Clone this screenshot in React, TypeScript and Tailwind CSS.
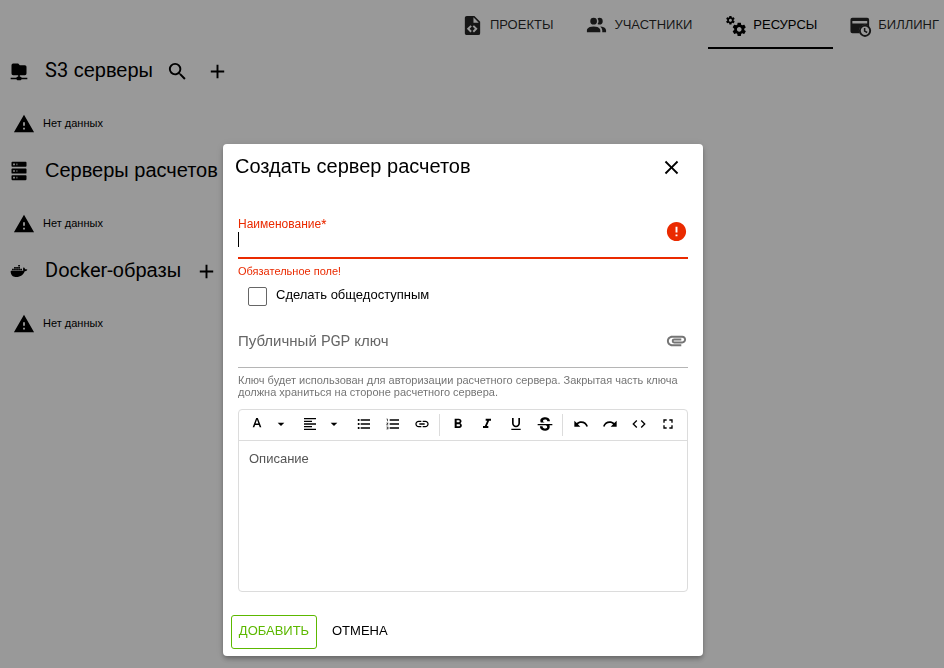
import type { ReactNode } from "react";
import {
  MdAdd,
  MdArrowDropDown,
  MdAttachment,
  MdClose,
  MdCode,
  MdError,
  MdFormatAlignLeft,
  MdFormatBold,
  MdFormatItalic,
  MdFormatListBulleted,
  MdFormatListNumbered,
  MdFormatUnderlined,
  MdFullscreen,
  MdLink,
  MdRedo,
  MdSearch,
  MdUndo,
  MdWarning,
} from "react-icons/md";

const paths = {
  fileCode:
    "M13,9H18.5L13,3.5V9M6,2H14L20,8V20A2,2 0 0,1 18,22H6C4.89,22 4,21.1 4,20V4C4,2.89 4.89,2 6,2M6.12,15.5L9.86,19.24L11.28,17.83L8.95,15.5L11.28,13.17L9.86,11.76L6.12,15.5M17.28,15.5L13.54,11.76L12.12,13.17L14.45,15.5L12.12,17.83L13.54,19.24L17.28,15.5Z",
  people:
    "M16 17V19H2V17S2 13 9 13 16 17 16 17M12.5 7.5A3.5 3.5 0 1 0 9 11A3.5 3.5 0 0 0 12.5 7.5M15.94 13A5.32 5.32 0 0 1 18 17V19H22V17S22 13.37 15.94 13M15 4A3.39 3.39 0 0 0 13.07 4.59A5 5 0 0 1 13.07 10.41A3.39 3.39 0 0 0 15 11A3.5 3.5 0 0 0 15 4Z",
  cogs: "M15.9,18.45C17.25,18.45 18.35,17.35 18.35,16C18.35,14.65 17.25,13.55 15.9,13.55C14.54,13.55 13.45,14.65 13.45,16C13.45,17.35 14.54,18.45 15.9,18.45M21.1,16.68L22.58,17.84C22.71,17.95 22.75,18.13 22.66,18.29L21.26,20.71C21.17,20.86 21,20.92 20.83,20.86L19.09,20.16C18.73,20.44 18.33,20.67 17.91,20.85L17.64,22.7C17.62,22.87 17.47,23 17.3,23H14.5C14.32,23 14.18,22.87 14.15,22.7L13.89,20.85C13.46,20.67 13.07,20.44 12.71,20.16L10.96,20.86C10.81,20.92 10.62,20.86 10.54,20.71L9.14,18.29C9.05,18.13 9.09,17.95 9.22,17.84L10.7,16.68L10.65,16L10.7,15.31L9.22,14.16C9.09,14.05 9.05,13.86 9.14,13.71L10.54,11.29C10.62,11.13 10.81,11.07 10.96,11.13L12.71,11.84C13.07,11.56 13.46,11.32 13.89,11.15L14.15,9.29C14.18,9.13 14.32,9 14.5,9H17.3C17.47,9 17.62,9.13 17.64,9.29L17.91,11.15C18.33,11.32 18.73,11.56 19.09,11.84L20.83,11.13C21,11.07 21.17,11.13 21.26,11.29L22.66,13.71C22.75,13.86 22.71,14.05 22.58,14.16L21.1,15.31L21.15,16L21.1,16.68M6.69,8.07C7.56,8.07 8.26,7.37 8.26,6.5C8.26,5.63 7.56,4.92 6.69,4.92A1.58,1.58 0 0,0 5.11,6.5C5.11,7.37 5.82,8.07 6.69,8.07M10.03,6.94L11,7.68C11.07,7.75 11.09,7.87 11.03,7.97L10.13,9.53C10.08,9.63 9.96,9.67 9.86,9.63L8.74,9.18L8,9.62L7.81,10.81C7.79,10.92 7.7,11 7.59,11H5.79C5.67,11 5.58,10.92 5.56,10.81L5.4,9.62L4.64,9.18L3.52,9.63C3.41,9.67 3.3,9.63 3.24,9.53L2.34,7.97C2.28,7.87 2.31,7.75 2.39,7.68L3.34,6.94L3.31,6.5L3.34,6.06L2.39,5.32C2.31,5.25 2.28,5.13 2.34,5.03L3.24,3.47C3.3,3.37 3.41,3.33 3.52,3.37L4.63,3.82L5.4,3.38L5.56,2.19C5.58,2.08 5.67,2 5.79,2H7.59C7.7,2 7.79,2.08 7.81,2.19L8,3.38L8.74,3.82L9.86,3.37C9.96,3.33 10.08,3.37 10.13,3.47L11.03,5.03C11.09,5.13 11.07,5.25 11,5.32L10.03,6.06L10.06,6.5L10.03,6.94Z",
  folderNetwork:
    "M3,15V5A2,2 0 0,1 5,3H11L13,5H19A2,2 0 0,1 21,7V15A2,2 0 0,1 19,17H13V19H14A1,1 0 0,1 15,20H22V22H15A1,1 0 0,1 14,23H10A1,1 0 0,1 9,22H2V20H9A1,1 0 0,1 10,19H11V17H5A2,2 0 0,1 3,15Z",
  server:
    "M4,1H20A1,1 0 0,1 21,2V6A1,1 0 0,1 20,7H4A1,1 0 0,1 3,6V2A1,1 0 0,1 4,1M4,9H20A1,1 0 0,1 21,10V14A1,1 0 0,1 20,15H4A1,1 0 0,1 3,14V10A1,1 0 0,1 4,9M4,17H20A1,1 0 0,1 21,18V22A1,1 0 0,1 20,23H4A1,1 0 0,1 3,22V18A1,1 0 0,1 4,17M9,5H10V3H9V5M9,13H10V11H9V13M9,21H10V19H9V21M5,3V5H7V3H5M5,11V13H7V11H5M5,19V21H7V19H5Z",
  docker:
    "M21.81 10.25C21.75 10.21 21.25 9.82 20.17 9.82C19.89 9.82 19.61 9.85 19.33 9.9C19.12 8.5 17.95 7.79 17.9 7.76L17.61 7.59L17.43 7.86C17.19 8.22 17 8.63 16.92 9.05C16.72 9.85 16.84 10.61 17.25 11.26C16.76 11.54 15.96 11.61 15.79 11.61H2.62C2.28 11.61 2 11.89 2 12.24C2 13.39 2.18 14.54 2.58 15.62C3.03 16.81 3.71 17.69 4.58 18.23C5.56 18.83 7.17 19.17 8.97 19.17C9.79 19.17 10.61 19.1 11.42 18.95C12.54 18.75 13.62 18.36 14.61 17.79C15.43 17.32 16.16 16.72 16.78 16C17.82 14.83 18.43 13.5 18.88 12.35H19.06C20.2 12.35 20.91 11.89 21.3 11.5C21.56 11.26 21.76 10.97 21.9 10.63L22 10.39L21.81 10.25M3.69 9.34H5.77V11.24H3.69ZM6.12 9.34H8.2V11.24H6.12ZM8.6 9.34H10.67V11.24H8.6ZM11.04 9.34H13.11V11.24H11.04ZM13.5 9.34H15.57V11.24H13.5ZM6.12 7.09H8.2V9H6.12ZM8.6 7.09H10.67V9H8.6ZM11.04 7.09H13.11V9H11.04ZM11.04 4.83H13.11V6.72H11.04Z",
  letterA:
    "M5.49 17h2.42l1.27-3.58h5.65L16.09 17h2.42L13.25 3h-2.5L5.49 17zm4.42-5.61 2.03-5.79h.12l2.03 5.79H9.91z",
  strike:
    "M23,12V14H18.61C19.61,16.14 19.56,22 12.38,22C4.05,22.05 4.37,15.5 4.37,15.5L8.34,15.55C8.37,18.92 11.5,18.92 12.12,18.88C12.76,18.83 15.15,18.84 15.34,16.5C15.42,15.41 14.32,14.58 13.12,14H1V12H23M19.41,7.89L15.43,7.86C15.43,7.86 15.6,5.09 12.15,5.08C8.7,5.06 9,7.28 9,7.56C9.04,7.84 9.34,9.22 12,9.88H5.71C5.71,9.88 2.22,3.15 10.74,2C19.45,0.8 19.43,7.91 19.41,7.89Z",
};

function Icon({ d, className }: { d: string; className: string }) {
  return (
    <svg viewBox="0 0 24 24" fill="currentColor" fillRule="evenodd" aria-hidden="true" className={className}>
      <path d={d} />
    </svg>
  );
}

function CardClockIcon() {
  return (
    <svg viewBox="0 0 24 24" fill="currentColor" aria-hidden="true" className="size-[23px] shrink-0">
      <path
        fillRule="evenodd"
        d="M3.5 4H19A2 2 0 0 1 21 6V13.6A6 6 0 0 0 11 20H3.5A2 2 0 0 1 1.500 18V6A2 2 0 0 1 3.500 4M3.500 7.200V9.800H19V7.200Z"
      />
      <circle cx="16.7" cy="17.5" r="5.4" fill="none" stroke="currentColor" strokeWidth="2" />
      <path d="M16.3 14.5V17.8L19 19.3" fill="none" stroke="currentColor" strokeWidth="1.6" />
    </svg>
  );
}

function Tab({ icon, label, active = false }: { icon: ReactNode; label: string; active?: boolean }) {
  return (
    <a
      href="#"
      className={`flex h-full shrink-0 items-center gap-1.5 border-b-2 px-4 pt-1 text-[13px] ${
        active ? "border-black text-black" : "border-transparent text-black/85"
      }`}
    >
      {icon}
      <span className="pb-0.5">{label}</span>
    </a>
  );
}

function Section({ icon, title, search = false }: { icon: string; title: ReactNode; search?: boolean }) {
  return (
    <section>
      <div className="flex h-11 items-center pl-[9px]">
        <Icon d={icon} className="size-5 shrink-0" />
        <h2 className="ml-4 mr-[5px] whitespace-nowrap pb-0.5 text-xl">{title}</h2>
        {search && (
          <button type="button" aria-label="Поиск" className="grid size-10 place-items-center">
            <MdSearch className="size-[23px]" />
          </button>
        )}
        <button type="button" aria-label="Добавить" className="grid size-10 place-items-center">
          <MdAdd className="size-[23px]" />
        </button>
      </div>
      <div className="flex h-14 items-center gap-2 pl-[13px] pt-1.5 text-[11px]">
        <MdWarning className="size-[22px]" />
        <span className="pb-0.5">Нет данных</span>
      </div>
    </section>
  );
}

function Tool({ label, children }: { label: string; children: ReactNode }) {
  return (
    <button type="button" aria-label={label} className="grid h-6 w-[29px] shrink-0 place-items-center pb-0.5">
      {children}
    </button>
  );
}

function MenuTool({ label, children }: { label: string; children: ReactNode }) {
  return (
    <button type="button" aria-label={label} className="flex h-6 w-[53px] shrink-0 items-center gap-2 px-1.5 pb-0.5">
      {children}
      <MdArrowDropDown className="size-4" />
    </button>
  );
}

function Dialog() {
  return (
    <div className="fixed inset-0 flex items-start justify-center bg-black/40 pr-[18px] pt-36">
      <form
        role="dialog"
        aria-labelledby="dialog-title"
        className="w-[480px] max-w-full rounded-sm bg-white shadow-[0_2px_4px_-1px_rgba(0,0,0,0.2),0_4px_5px_rgba(0,0,0,0.14),0_1px_10px_rgba(0,0,0,0.12)]"
      >
        <div className="flex h-[46px] items-center justify-between pl-3 pr-5">
          <h1 id="dialog-title" className="pb-0.5 text-xl">
            Создать сервер расчетов
          </h1>
          <button type="button" aria-label="Закрыть">
            <MdClose className="size-[23px]" />
          </button>
        </div>

        <div className="px-[15px] pt-6">
          <div className="flex h-[45px] items-center border-b-2 border-[#ea2a00] pb-2">
            <div className="flex flex-1 flex-col">
              <label htmlFor="name" className="text-xs leading-4 text-[#ea2a00]">
                Наименование<span className="font-[Roboto]">*</span>
              </label>
              <div className="flex h-4 items-center">
                <span className="h-[15px] w-px bg-black" />
                <input id="name" type="text" className="h-4 flex-1 text-sm caret-transparent outline-none" />
              </div>
            </div>
            <MdError className="size-[23px] text-[#ea2a00]" />
          </div>
          <p className="pt-1.5 text-[11px] leading-3 text-[#ea2a00]">
            Обязательное поле<span className="font-[Roboto]">!</span>
          </p>

          <label className="mt-1.5 flex h-6 items-center gap-[9px] pl-2.5 text-[13px]">
            <input type="checkbox" className="size-[19px] appearance-none rounded-xs border border-[#666]" />
            <span className="pb-0.5">Сделать общедоступным</span>
          </label>

          <label className="mt-1.5 flex h-[54px] items-center justify-between border-b border-[#b5b5b5] text-[15px] text-[#666]">
            <span className="pt-0.5">
              Публичный <span className="font-[Roboto]">PGP</span> ключ
            </span>
            <MdAttachment className="size-[23px] text-[#757575]" />
            <input type="file" className="sr-only" />
          </label>
          <p className="pt-1.5 text-[11px] leading-3 text-[#757575]">
            Ключ будет использован для авторизации расчетного сервера. Закрытая часть ключа должна храниться на стороне
            расчетного сервера.
          </p>

          <div className="mt-[11px] rounded-sm border border-[#dcdcdc]">
            <div className="flex h-[31px] items-center border-b border-[#dcdcdc] pl-1">
              <MenuTool label="Цвет текста">
                <Icon d={paths.letterA} className="size-4" />
              </MenuTool>
              <MenuTool label="Выравнивание">
                <MdFormatAlignLeft className="size-4" />
              </MenuTool>
              <Tool label="Маркированный список"><MdFormatListBulleted className="size-4" /></Tool>
              <Tool label="Нумерованный список"><MdFormatListNumbered className="size-4" /></Tool>
              <Tool label="Ссылка"><MdLink className="size-4" /></Tool>
              <span className="mx-[3px] h-[22px] w-px bg-[#dcdcdc]" />
              <Tool label="Полужирный"><MdFormatBold className="size-4" /></Tool>
              <Tool label="Курсив"><MdFormatItalic className="size-4" /></Tool>
              <Tool label="Подчёркнутый"><MdFormatUnderlined className="size-4" /></Tool>
              <Tool label="Зачёркнутый"><Icon d={paths.strike} className="size-4" /></Tool>
              <span className="mx-[3px] h-[22px] w-px bg-[#dcdcdc]" />
              <Tool label="Отменить"><MdUndo className="size-4" /></Tool>
              <Tool label="Повторить"><MdRedo className="size-4" /></Tool>
              <Tool label="Исходный код"><MdCode className="size-4" /></Tool>
              <Tool label="На весь экран"><MdFullscreen className="size-4" /></Tool>
            </div>
            <textarea
              aria-label="Описание"
              placeholder="Описание"
              className="block h-[150px] w-full resize-none p-2.5 text-[13px] leading-4 outline-none placeholder:text-[#555]"
            />
          </div>
        </div>

        <div className="flex items-center gap-[7px] px-2 pb-[7px] pt-[23px] text-[13px]">
          <button type="submit" className="h-[34px] w-[86px] rounded-[3px] border border-[#5cb800] pb-0.5 text-[#5cb800]">
            ДОБАВИТЬ
          </button>
          <button type="button" className="h-[34px] px-2 pb-0.5">
            ОТМЕНА
          </button>
        </div>
      </form>
    </div>
  );
}

export default function App() {
  return (
    <div className="min-h-screen overflow-x-hidden bg-white font-['Liberation_Sans',Arial,sans-serif] text-black">
      <nav className="-mr-[11px] flex h-[49px] justify-end">
        <Tab label="ПРОЕКТЫ" icon={<Icon d={paths.fileCode} className="size-[23px]" />} />
        <Tab label="УЧАСТНИКИ" icon={<Icon d={paths.people} className="size-[23px]" />} />
        <Tab label="РЕСУРСЫ" active icon={<Icon d={paths.cogs} className="size-[23px]" />} />
        <Tab label="БИЛЛИНГ" icon={<CardClockIcon />} />
      </nav>
      <main>
        <Section
          icon={paths.folderNetwork}
          search
          title={
            <>
              <span className="font-[Roboto]">S3</span> серверы
            </>
          }
        />
        <Section icon={paths.server} title="Серверы расчетов" />
        <Section
          icon={paths.docker}
          title={
            <>
              <span className="font-[Roboto]">Docker-</span>образы
            </>
          }
        />
      </main>
      <Dialog />
    </div>
  );
}
